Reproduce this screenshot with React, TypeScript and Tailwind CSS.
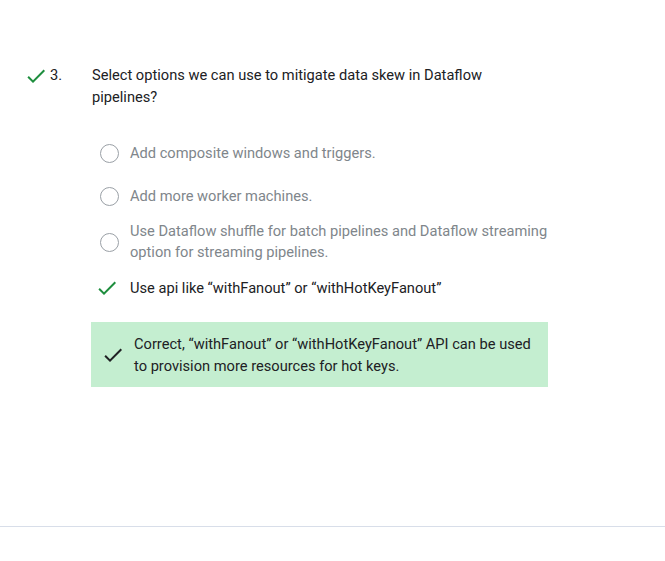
const CheckIcon = ({ className }: { className?: string }) => (
  <svg viewBox="0 0 24 24" width="24" height="24" className={className} fill="currentColor">
    <path d="M9 16.17L4.83 12l-1.42 1.41L9 19 21 7l-1.41-1.41z" />
  </svg>
);

const OPTIONS = [
  { text: "Add composite windows and triggers.", correct: false },
  { text: "Add more worker machines.", correct: false },
  {
    text: "Use Dataflow shuffle for batch pipelines and Dataflow streaming option for streaming pipelines.",
    correct: false,
  },
  { text: "Use api like “withFanout” or “withHotKeyFanout”", correct: true },
];

export default function App() {
  return (
    <div className="flex h-[561px] w-[665px] flex-col bg-white font-['Roboto',sans-serif] text-[14.65px]">
      <div className="flex-1 pt-[64px]">
        <div className="flex">
          <div className="flex w-[92px] shrink-0 items-start">
            <CheckIcon className="ml-[24px] mt-[-0.5px] text-[#1e8e3e]" />
            <span className="ml-[2px] leading-[22px] text-[#202124]">3.</span>
          </div>
          <div className="w-[456px]">
            <p className="leading-[22px] text-[#202124]">
              Select options we can use to mitigate data skew in Dataflow pipelines?
            </p>

            <div className="mt-[27px] flex flex-col gap-[7px] pl-[8px]">
              {OPTIONS.map((o) => (
                <div key={o.text} className="flex min-h-[36px] items-center">
                  <div className="flex w-[30px] shrink-0 items-center">
                    {o.correct ? (
                      <CheckIcon className="-ml-[5px] text-[#1e8e3e]" />
                    ) : (
                      <span className="h-[19px] w-[19px] rounded-full border border-[#9aa0a6]" />
                    )}
                  </div>
                  <span
                    className={`leading-[21px] ${o.correct ? "text-[#202124]" : "text-[#80868b]"}`}
                  >
                    {o.text}
                  </span>
                </div>
              ))}
            </div>

            <div className="-ml-[1px] mt-[16px] flex h-[65px] items-center bg-[#c4eed0] pl-[10px] pr-[12px]">
              <CheckIcon className="shrink-0 text-[#202124]" />
              <p className="ml-[9px] leading-[22px] text-[#202124]">
                Correct, “withFanout” or “withHotKeyFanout” API can be used to provision more
                resources for hot keys.
              </p>
            </div>
          </div>
        </div>
      </div>
      <div className="h-[35px] border-t border-[#d8dee9] bg-white" />
    </div>
  );
}
